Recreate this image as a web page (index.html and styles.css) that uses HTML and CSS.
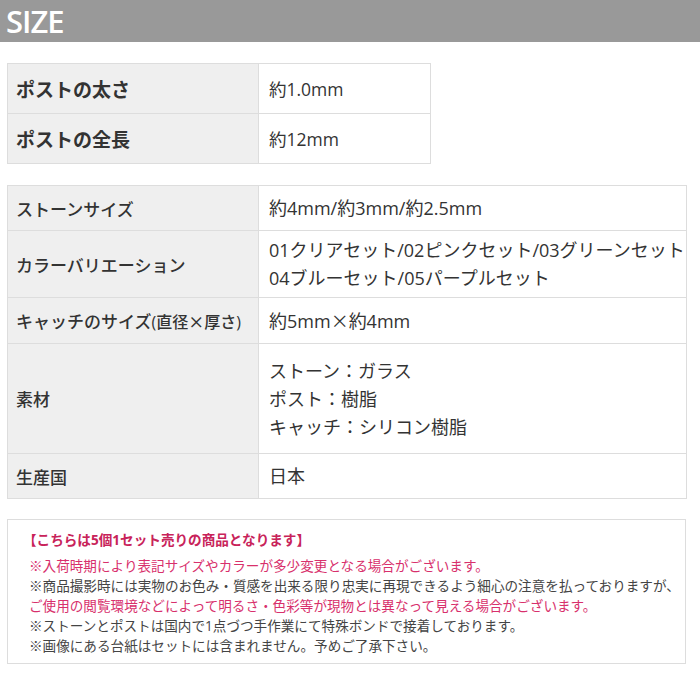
FILE: index.html
```html
<!DOCTYPE html>
<html lang="ja">
<head>
<meta charset="utf-8">
<link rel="stylesheet" href="styles.css">
</head>
<body>
<div class="header"><span class="header-title">SIZE</span></div>
<div class="content">
  <table class="spec spec-small">
    <tr><th>ポストの太さ</th><td>約1.0mm</td></tr>
    <tr><th>ポストの全長</th><td>約12mm</td></tr>
  </table>
  <table class="spec spec-large">
    <tr class="r1"><th>ストーンサイズ</th><td>約4mm/約3mm/約2.5mm</td></tr>
    <tr class="r2"><th>カラーバリエーション</th><td>01クリアセット/02ピンクセット/03グリーンセット<br>04ブルーセット/05パープルセット</td></tr>
    <tr class="r3"><th>キャッチのサイズ<span class="small">(直径<span class="cjk">×</span>厚さ)</span></th><td>約5mm<span class="cjk">×</span>約4mm</td></tr>
    <tr class="r4"><th>素材</th><td>ストーン：ガラス<br>ポスト：樹脂<br>キャッチ：シリコン樹脂</td></tr>
    <tr class="r5"><th>生産国</th><td>日本</td></tr>
  </table>
  <div class="notice">
    <p class="notice-title">【こちらは5個1セット売りの商品となります】</p>
    <p class="pink">※入荷時期により表記サイズやカラーが多少変更となる場合がございます。</p>
    <p>※商品撮影時には実物のお色み・質感を出来る限り忠実に再現できるよう細心の注意を払っておりますが、</p>
    <p class="pink">ご使用の閲覧環境などによって明るさ・色彩等が現物とは異なって見える場合がございます。</p>
    <p>※ストーンとポストは国内で1点づつ手作業にて特殊ボンドで接着しております。</p>
    <p>※画像にある台紙はセットには含まれません。予めご了承下さい。</p>
  </div>
</div>
</body>
</html>
```
FILE: styles.css
```css
html, body {
  margin: 0;
  padding: 0;
  background: #fff;
}
body {
  font-family: "Open Sans", "Noto Sans CJK JP", sans-serif;
  color: #333;
}
.header {
  height: 42px;
  background: #999;
  display: flex;
  align-items: center;
  padding-left: 6px;
}
.header-title {
  color: #fff;
  font-size: 31px;
  font-weight: 600;
  letter-spacing: -1px;
  line-height: normal;
}
.content {
  padding: 21px 14px 0 7px;
}
.spec {
  border-collapse: collapse;
}
.spec th, .spec td {
  border: 1px solid #ddd;
  text-align: left;
  vertical-align: middle;
}
.spec th {
  background: #efefef;
  width: 242px;
  padding: 0 0 0 8px;
}
.spec td {
  padding: 0 0 0 10px;
}
.spec-small {
  width: 424px;
}
.spec-small th {
  font-size: 19px;
  font-weight: 700;
  height: 49px;
}
.spec-small td {
  font-size: 17.5px;
  color: #333;
}
.spec-large {
  width: 680px;
  margin-top: 21px;
}
.spec-large th {
  font-size: 17px;
  font-weight: 500;
}
.spec-large td {
  font-size: 18px;
  line-height: 28px;
  color: #333;
}
.spec-large .small {
  font-size: 16px;
}
.cjk {
  font-family: "Noto Sans CJK JP", sans-serif;
}
.r1 th { height: 44px; }
.r2 th { height: 66px; }
.r3 th { height: 45px; }
.r4 th { height: 109px; }
.r5 th { height: 44px; }
.notice {
  margin-top: 20px;
  border: 1px solid #ddd;
  width: 679px;
  box-sizing: border-box;
  padding: 10px 0 7px 21px;
  font-size: 13.6px;
  line-height: 20px;
  color: #444;
}
.notice p {
  margin: 0;
  white-space: nowrap;
}
.notice-title {
  color: #c8235a;
  font-weight: 700;
  margin-bottom: 6px !important;
  margin-left: -6px !important;
}
.pink {
  color: #d8306c;
}
```
